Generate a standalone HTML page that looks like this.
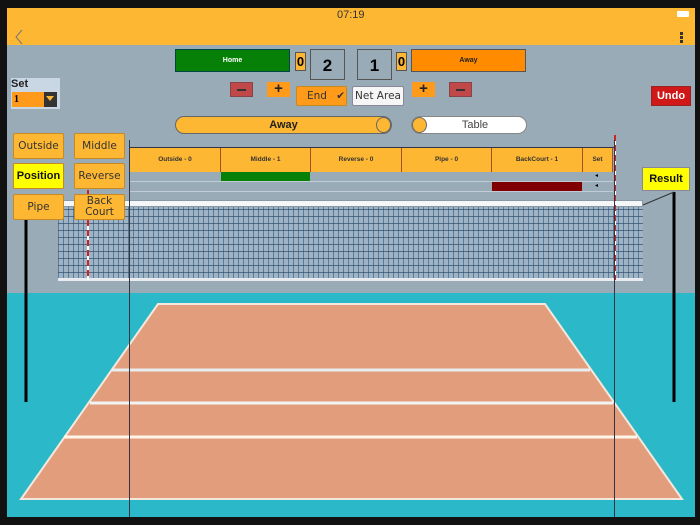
<!DOCTYPE html><html><head><style>
*{margin:0;padding:0;box-sizing:border-box}
body{width:700px;height:525px;background:#111;position:relative;overflow:hidden;font-family:"Liberation Sans","DejaVu Sans",sans-serif}
.a{position:absolute}
.btn{position:absolute;background:#fdb733;border:1px solid #c88a20;color:#333;font-size:10.5px;text-align:center;border-radius:2px;font-family:"DejaVu Sans",sans-serif;white-space:nowrap}
.th{position:absolute;top:148px;height:24px;background:#fdb733;border-right:1px solid #a0521a;font-size:6.5px;font-weight:bold;color:#333;text-align:center;line-height:24px}
</style></head><body>
<div class="a" style="left:7px;top:8px;width:688px;height:509px;background:#9aabb8"></div>
<div class="a" style="left:7px;top:8px;width:688px;height:37px;background:#fdb733"></div>
<div class="a" style="left:337px;top:9px;font-size:11px;color:#333">07:19</div>
<div class="a" style="left:677px;top:11px;width:12px;height:6px;background:#fff;border-radius:1px"></div>
<svg class="a" style="left:14px;top:29px" width="10" height="16"><path d="M8 1 L2 8 L8 15" fill="none" stroke="#777" stroke-width="1"/></svg>
<div class="a" style="left:680px;top:32px;width:3px;height:3px;background:#333;box-shadow:0 4px #333,0 8px #333"></div>
<!-- floor -->
<div class="a" style="left:7px;top:293px;width:688px;height:224px;background:#2bb8c8"></div>
<div class="a" style="left:7px;top:280px;width:688px;height:13px;background:#9aabb8"></div>
<svg class="a" style="left:0;top:0" width="700" height="525">
 <polygon points="158,304 545,304 682,499 21,499" fill="#e29d7c" stroke="#f4e8dc" stroke-width="2"/>
 <line x1="112" y1="370" x2="590" y2="370" stroke="#e8eef0" stroke-width="3"/>
 <line x1="90" y1="403" x2="613" y2="403" stroke="#f0f4f4" stroke-width="3"/>
 <line x1="64" y1="437" x2="637" y2="437" stroke="#fff6ea" stroke-width="3"/>
 <line x1="26" y1="200" x2="26" y2="402" stroke="#000" stroke-width="3"/>
 <line x1="674" y1="192" x2="674" y2="402" stroke="#000" stroke-width="3"/>
 <line x1="643" y1="205" x2="674" y2="192" stroke="#333" stroke-width="1"/>
</svg>
<!-- net -->
<div class="a" style="left:58px;top:206px;width:585px;height:74px;background-color:#9fb3c4;background-image:repeating-linear-gradient(90deg,rgba(30,80,120,.55) 0 1px,transparent 1px 5px),repeating-linear-gradient(0deg,rgba(30,60,90,.6) 0 1px,transparent 1px 7px)"></div>
<div class="a" style="left:58px;top:200px;width:585px;height:7px;background:#f4f6f8;border:1px solid #8898a4"></div>
<div class="a" style="left:58px;top:278px;width:585px;height:3px;background:#e8ecf0"></div>
<div class="a" style="left:87px;top:190px;width:2px;height:90px;background:repeating-linear-gradient(#c22 0 6px,#fff 6px 10px)"></div>
<div class="a" style="left:614px;top:135px;width:2px;height:145px;background:repeating-linear-gradient(#c22 0 6px,#fff 6px 10px)"></div>
<div class="a" style="left:129px;top:140px;width:1px;height:377px;background:#334"></div>
<div class="a" style="left:614px;top:140px;width:1px;height:377px;background:#334"></div>
<!-- score -->
<div class="a" style="left:175px;top:49px;width:115px;height:23px;background:#068006;border:1px solid #044;color:#fff;font-size:7px;font-weight:bold;text-align:center;line-height:21px">Home</div>
<div class="a" style="left:295px;top:52px;width:11px;height:19px;background:#fdb733;border:1px solid #555;font-weight:bold;font-size:13px;line-height:17px;text-align:center">0</div>
<div class="a" style="left:310px;top:49px;width:35px;height:31px;border:1px solid #555;font-weight:bold;font-size:17px;text-align:center;line-height:31px">2</div>
<div class="a" style="left:357px;top:49px;width:35px;height:31px;border:1px solid #555;font-weight:bold;font-size:17px;text-align:center;line-height:31px">1</div>
<div class="a" style="left:396px;top:52px;width:11px;height:19px;background:#fdb733;border:1px solid #555;font-weight:bold;font-size:13px;line-height:17px;text-align:center">0</div>
<div class="a" style="left:411px;top:49px;width:115px;height:23px;background:#ff8c00;border:1px solid #555;color:#222;font-size:7px;font-weight:bold;text-align:center;line-height:21px">Away</div>
<div class="a" style="left:230px;top:82px;width:23px;height:15px;background:#c04848;border:1px solid #844"><div class="a" style="left:6px;top:6px;width:9px;height:2px;background:#333"></div></div>
<div class="a" style="left:267px;top:82px;width:23px;height:15px;background:#ff9a1a;font-weight:bold;font-size:15px;text-align:center;line-height:14px;color:#222">+</div>
<div class="btn" style="left:296px;top:86px;width:51px;height:20px;line-height:18px;background:#ff9a1a;text-align:left;padding-left:10px">End <span style="margin-left:6px">✔</span></div>
<div class="btn" style="left:352px;top:86px;width:52px;height:20px;line-height:18px;background:#f6f6f6;border-color:#889">Net Area</div>
<div class="a" style="left:412px;top:82px;width:23px;height:15px;background:#ff9a1a;font-weight:bold;font-size:15px;text-align:center;line-height:14px;color:#222">+</div>
<div class="a" style="left:449px;top:82px;width:23px;height:15px;background:#c04848;border:1px solid #844"><div class="a" style="left:6px;top:6px;width:9px;height:2px;background:#333"></div></div>
<div class="a" style="left:651px;top:86px;width:40px;height:20px;background:#d01818;border:1px solid #922;color:#fff;font-size:11px;font-weight:bold;text-align:center;line-height:18px">Undo</div>
<!-- set -->
<div class="a" style="left:11px;top:78px;width:49px;height:31px;background:#c9d6e4"></div>
<div class="a" style="left:11px;top:78px;font-size:11px;font-weight:bold;color:#222">Set</div>
<div class="a" style="left:12px;top:92px;width:45px;height:15px;background:#ff9a1a;font-size:10px;font-weight:bold;padding-left:2px;line-height:15px;font-family:'Liberation Serif',serif">1</div>
<div class="a" style="left:44px;top:92px;width:13px;height:15px;background:#333"><div class="a" style="left:2px;top:4px;border:4px solid transparent;border-top:5px solid #fdb733"></div></div>
<!-- toggles -->
<div class="a" style="left:175px;top:116px;width:217px;height:18px;background:#fdb733;border:1px solid #666;border-radius:9px;font-size:11px;font-weight:bold;text-align:center;line-height:16px;color:#222">Away</div>
<div class="a" style="left:376px;top:117px;width:15px;height:16px;border-radius:50%;background:#fdb733;border:1px solid #666"></div>
<div class="a" style="left:411px;top:116px;width:116px;height:18px;background:#fff;border:1px solid #888;border-radius:9px;font-size:11px;text-align:center;line-height:16px;color:#444;padding-left:12px">Table</div>
<div class="a" style="left:412px;top:117px;width:15px;height:16px;border-radius:50%;background:#fdb733;border:1px solid #666"></div>
<!-- table -->
<div class="a" style="left:129px;top:147px;width:485px;height:1px;background:#334"></div>
<div class="th" style="left:130px;width:91px">Outside - 0</div>
<div class="th" style="left:221px;width:90px">Middle - 1</div>
<div class="th" style="left:311px;width:91px">Reverse - 0</div>
<div class="th" style="left:402px;width:90px">Pipe - 0</div>
<div class="th" style="left:492px;width:91px">BackCourt - 1</div>
<div class="th" style="left:583px;width:30px">Set</div>
<div class="a" style="left:130px;top:172px;width:483px;height:20px;border-bottom:1px solid #c0ccd6;background:linear-gradient(transparent 9px,#c0ccd6 9px 10px,transparent 10px)"></div>
<div class="a" style="left:221px;top:172px;width:89px;height:9px;background:#068006"></div>
<div class="a" style="left:492px;top:182px;width:90px;height:9px;background:#800000"></div>
<div class="a" style="left:595px;top:172px;font-size:6px">◂</div>
<div class="a" style="left:595px;top:182px;font-size:6px">◂</div>
<!-- left buttons -->
<div class="btn" style="left:13px;top:133px;width:51px;height:26px;line-height:24px">Outside</div>
<div class="btn" style="left:74px;top:133px;width:51px;height:26px;line-height:24px">Middle</div>
<div class="btn" style="left:13px;top:163px;width:51px;height:26px;line-height:24px;background:#ffff00;font-weight:bold;color:#111;font-family:'Liberation Sans',sans-serif;font-size:11px">Position</div>
<div class="btn" style="left:74px;top:163px;width:51px;height:26px;line-height:24px">Reverse</div>
<div class="btn" style="left:13px;top:194px;width:51px;height:26px;line-height:24px">Pipe</div>
<div class="btn" style="left:74px;top:194px;width:51px;height:26px;line-height:11px;padding-top:1px">Back<br>Court</div>
<div class="a" style="left:642px;top:167px;width:48px;height:24px;background:#ffff00;border:1px solid #889;color:#111;font-size:11px;font-weight:bold;text-align:center;line-height:22px">Result</div>
</body></html>
